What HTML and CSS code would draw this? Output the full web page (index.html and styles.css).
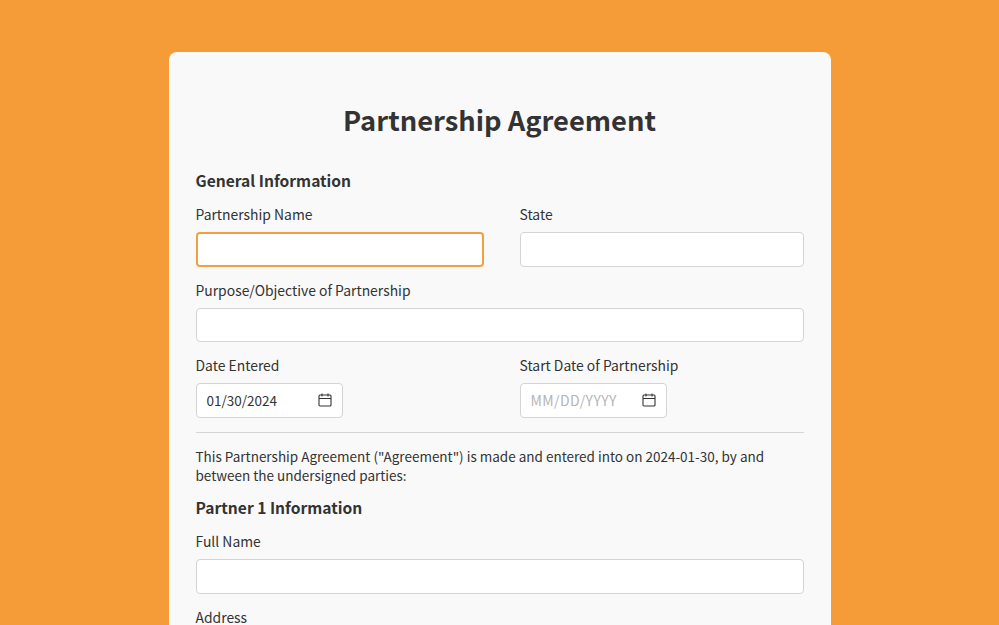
FILE: index.html
```html
<!DOCTYPE html>
<html lang="en">
<head>
  <meta charset="UTF-8">
  <title>Partnership Agreement</title>
  <link rel="stylesheet" href="styles.css">
</head>
<body>
  <div class="form-card">
    <h1>Partnership Agreement</h1>

    <h2>General Information</h2>
    <div class="row">
      <div class="field">
        <label>Partnership Name</label>
        <div class="input focused"></div>
      </div>
      <div class="field">
        <label>State</label>
        <div class="input"></div>
      </div>
    </div>
    <div class="field">
      <label>Purpose/Objective of Partnership</label>
      <div class="input"></div>
    </div>
    <div class="row">
      <div class="field">
        <label>Date Entered</label>
        <div class="input date">
          <span>01/30/2024</span>
          <svg width="14" height="14" viewBox="0 0 14 14" fill="none" stroke="#333" stroke-width="1.1"><rect x="1" y="2" width="12" height="11" rx="1"/><path d="M1 5.5h12M4 .5v3M10 .5v3"/></svg>
        </div>
      </div>
      <div class="field">
        <label>Start Date of Partnership</label>
        <div class="input date">
          <span class="placeholder">MM/DD/YYYY</span>
          <svg width="14" height="14" viewBox="0 0 14 14" fill="none" stroke="#333" stroke-width="1.1"><rect x="1" y="2" width="12" height="11" rx="1"/><path d="M1 5.5h12M4 .5v3M10 .5v3"/></svg>
        </div>
      </div>
    </div>

    <hr>
    <p>This Partnership Agreement ("Agreement") is made and entered into on 2024-01-30, by and between the undersigned parties:</p>

    <h2>Partner 1 Information</h2>
    <div class="field">
      <label>Full Name</label>
      <div class="input"></div>
    </div>
    <div class="field">
      <label>Address</label>
      <div class="input"></div>
    </div>
  </div>
</body>
</html>
```
FILE: styles.css
```css
html, body {
  height: 625px;
  overflow: hidden;
}
body {
  margin: 0;
  padding-top: 52px;
  box-sizing: border-box;
  background-color: #f59c38;
  font-family: "Noto Sans CJK JP", "Noto Sans", sans-serif;
  color: #333;
}
.form-card {
  width: 662px;
  box-sizing: border-box;
  margin: 0 auto;
  padding: 45px 27px 40px;
  background-color: #f9f9f9;
  border-radius: 8px;
}
h1 {
  margin: 0 0 27px;
  font-size: 27.3px;
  line-height: 44px;
  font-weight: 700;
  text-align: center;
}
h2 {
  margin: 0 0 12px;
  font-size: 15.6px;
  line-height: 24px;
  font-weight: 700;
}
label {
  display: block;
  margin-bottom: 8px;
  font-size: 13.9px;
  line-height: 20px;
}
.row {
  display: grid;
  grid-template-columns: 288px 284px;
  gap: 36px;
}
.field {
  margin-bottom: 13px;
}
.input {
  height: 34.5px;
  box-sizing: border-box;
  background-color: #fff;
  border: 1px solid #d4d4d4;
  border-radius: 4px;
}
.input.focused {
  border: 2px solid #f0a040;
}
.input.date {
  width: 147px;
  display: flex;
  align-items: center;
  justify-content: space-between;
  padding: 0 10px;
  font-size: 13.5px;
}
.placeholder {
  font-size: 14px;
  letter-spacing: 0.4px;
  color: #b5b5b5;
}
hr {
  margin: 1.5px 0 14px;
  border: none;
  border-top: 1px solid #d4d4d4;
}
p {
  margin: 0 0 11px;
  font-size: 13.5px;
  line-height: 18.5px;
}
```
